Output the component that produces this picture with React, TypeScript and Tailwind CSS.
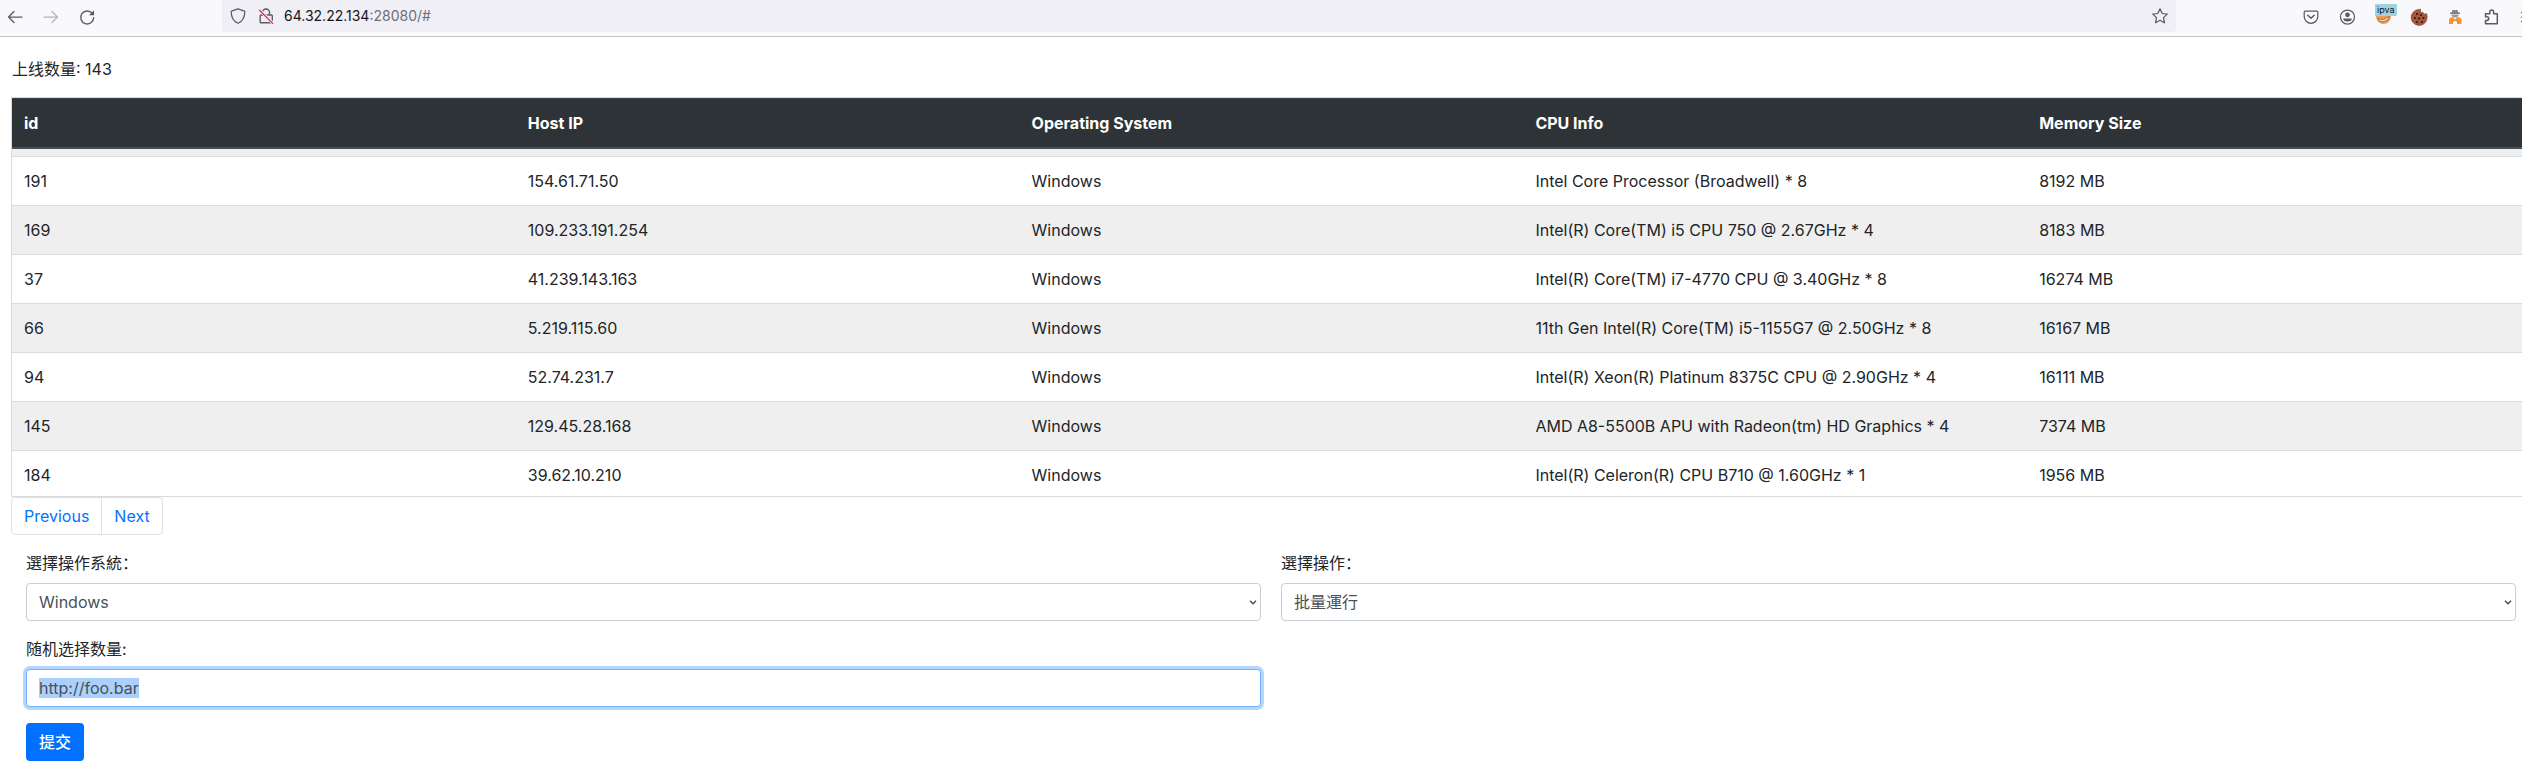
import { useEffect, useRef, type ReactNode } from "react";

type Host = { id: number; ip: string; os: string; cpu: string; memory: string };

const hosts: Host[] = [
  { id: 191, ip: "154.61.71.50", os: "Windows", cpu: "Intel Core Processor (Broadwell) * 8", memory: "8192 MB" },
  { id: 169, ip: "109.233.191.254", os: "Windows", cpu: "Intel(R) Core(TM) i5 CPU 750 @ 2.67GHz * 4", memory: "8183 MB" },
  { id: 37, ip: "41.239.143.163", os: "Windows", cpu: "Intel(R) Core(TM) i7-4770 CPU @ 3.40GHz * 8", memory: "16274 MB" },
  { id: 66, ip: "5.219.115.60", os: "Windows", cpu: "11th Gen Intel(R) Core(TM) i5-1155G7 @ 2.50GHz * 8", memory: "16167 MB" },
  { id: 94, ip: "52.74.231.7", os: "Windows", cpu: "Intel(R) Xeon(R) Platinum 8375C CPU @ 2.90GHz * 4", memory: "16111 MB" },
  { id: 145, ip: "129.45.28.168", os: "Windows", cpu: "AMD A8-5500B APU with Radeon(tm) HD Graphics * 4", memory: "7374 MB" },
  { id: 184, ip: "39.62.10.210", os: "Windows", cpu: "Intel(R) Celeron(R) CPU B710 @ 1.60GHz * 1", memory: "1956 MB" },
];

const headings = ["id", "Host IP", "Operating System", "CPU Info", "Memory Size"];

function IconButton({ label, children }: { label: string; children: ReactNode }) {
  return (
    <button type="button" aria-label={label} className="relative size-4 shrink-0 text-[#5b5b66]">
      <svg viewBox="0 0 16 16" className="size-4 overflow-visible" fill="none" stroke="currentColor" strokeWidth="1.25" strokeLinecap="round" strokeLinejoin="round">
        {children}
      </svg>
    </button>
  );
}

function BrowserBar() {
  return (
    <header className="flex h-[37px] items-start border-b border-[#c0c0c6] bg-[#f9f9fb]">
      <nav className="flex h-[33px] shrink-0 items-center gap-5 pl-[7px]">
        <IconButton label="Back">
          <path d="M15 8H1.5M7 2.5 1.5 8 7 13.5" />
        </IconButton>
        <IconButton label="Forward">
          <path d="M1 8h13.500M9 2.500 14.500 8 9 13.500" stroke="#b4b4ba" />
        </IconButton>
        <IconButton label="Reload">
          <path d="M13.300 4.400A6.500 6.500 0 1 0 14.700 8.600" strokeWidth="1.4" />
          <path d="M15 1.200v5h-5z" fill="currentColor" stroke="none" />
        </IconButton>
      </nav>

      <div className="ml-[127px] mr-[127px] flex h-8 min-w-0 flex-1 items-center rounded-b bg-[#f0eff5] pl-2 pr-2">
        <IconButton label="Tracking protection">
          <path d="M8 .8 14.500 3.200c.2 0 .3.200.3.500 0 5.500-2.300 9.500-6.800 11.600C3.500 13.200 1.200 9.200 1.200 3.700c0-.3.100-.5.300-.5z" />
        </IconButton>
        <span className="ml-3 flex">
          <IconButton label="Connection not secure">
            <path d="M4.500 7V4.500a3.500 3.500 0 0 1 7 0V7M3 7h10.500q.8 0 .8.800v6.200q0 .8-.8.800H3q-.8 0-.8-.8V7.800Q2.200 7 3 7z" strokeWidth="1.400" />
            <path d="M1.800 2.200 15 15.400" stroke="#f0eff5" strokeWidth="3" />
            <path d="M1.500 2.200 14.700 15.400" stroke="#e22850" strokeWidth="1.300" />
          </IconButton>
        </span>
        <span className="ml-[10px] flex-1 text-[14px] leading-8 text-[#6e6e78]">
          <span className="text-[#15141a]">64.32.22.134</span>:28080/#
        </span>
        <IconButton label="Bookmark">
          <path d="m8 .8 2.200 4.700 5.100.6-3.800 3.500 1 5.200L8 12.300l-4.500 2.500 1-5.200L.7 6.100l5.100-.6z" />
        </IconButton>
      </div>

      <div className="flex h-[33px] w-[219px] shrink-0 items-center gap-5 overflow-hidden">
        <IconButton label="Pocket">
          <path d="M2.200 2.200h11.600q1 0 1 1v4.300a6.800 6.800 0 0 1-13.600 0V3.200q0-1 1-1z" />
          <path d="M4.800 6.300 8 9.300l3.200-3" strokeWidth="1.500" />
        </IconButton>
        <IconButton label="Account">
          <circle cx="8.500" cy="8" r="7" />
          <circle cx="8.500" cy="5.800" r="2.400" fill="currentColor" stroke="none" />
          <path d="M4.300 9.500h8.400q.2 3-4.200 3t-4.200-3z" fill="currentColor" stroke="none" />
        </IconButton>
        <button type="button" aria-label="IP address extension" className="relative size-4 shrink-0">
          <svg viewBox="0 0 16 16" className="size-4 overflow-visible">
            <circle cx="8.500" cy="7.500" r="7.500" fill="#ef9a4c" />
            <path d="M3 9q5 4 11-2l-1 4q-5 3-9 1z" fill="#f6e3d0" stroke="#9a6a48" strokeWidth=".9" />
          </svg>
          <span className="absolute -top-[5px] left-0 rounded-[1px] bg-[#9fd3e2] px-[2px] text-[9px] leading-3 text-[#15141a]">ipva</span>
        </button>
        <IconButton label="Cookie editor">
          <path d="M7 .5a8 8 0 1 0 9 9.500 8 8 0 0 0-.6-5.500l-2 .8-1.500-2-2.400.200L9.500.6z" fill="#a6583c" stroke="#7a3f2b" strokeWidth=".6" />
          <g fill="#2b1310" stroke="none">
            <circle cx="6" cy="5" r="1" />
            <circle cx="10" cy="6" r="1" />
            <circle cx="4" cy="9" r="1" />
            <circle cx="8" cy="9.500" r="1.100" />
            <circle cx="12.500" cy="9" r="1.100" />
            <circle cx="6" cy="13" r="1" />
            <circle cx="11" cy="13" r="1" />
          </g>
        </IconButton>
        <IconButton label="User agent extension">
          <g stroke="none">
            <path d="M5.500 1h1.700l.8.600.8-.6h1.700l.7 2.500H13V5H3V3.500h1.800z" fill="#808086" />
            <path d="M4.500 5.500h7V7l-2 1.500h-3L4.500 7z" fill="#9a9aa0" />
            <path d="M5.500 8 8 10.500 10.500 8l3 1q1 .5 1 2v4H10v-2H6v2H2v-4q0-1.500 1-2z" fill="#f5923a" />
            <path d="M6.800 12h2.400v3H6.800z" fill="#f9f9fb" />
          </g>
        </IconButton>
        <IconButton label="Extensions">
          <path d="M2.500 14.800v-3.300h1.300a1.900 1.900 0 0 0 0-3.800H2.500V4.800h4.300V3a1.900 1.900 0 0 1 3.800 0v1.800h3.700v10z" strokeWidth="1.500" />
        </IconButton>
        <IconButton label="Menu">
          <path d="M2.500 3.500h12M2.500 8h12M2.500 12.500h12" />
        </IconButton>
      </div>
    </header>
  );
}

function SelectField({ id, label, options }: { id: string; label: string; options: string[] }) {
  return (
    <div>
      <label htmlFor={id} className="mb-2 block">
        {label}
      </label>
      <div className="relative">
        <select id={id} className="block h-[38px] w-full appearance-none rounded border border-[#c8ced3] bg-white px-3 text-[#495057]">
          {options.map((option) => (
            <option key={option}>{option}</option>
          ))}
        </select>
        <svg viewBox="0 0 8 5" className="pointer-events-none absolute right-1 top-[17px] h-[5px] w-2 overflow-visible" fill="none" stroke="#4b4f54" strokeWidth="1.500">
          <path d="m1 .8 3 3 3-3" />
        </svg>
      </div>
    </div>
  );
}

export default function App() {
  const countRef = useRef<HTMLInputElement>(null);

  useEffect(() => {
    countRef.current?.focus();
    countRef.current?.select();
  }, []);

  return (
    <div className="min-h-screen overflow-hidden bg-white font-['Inter','Noto_Sans_CJK_SC',sans-serif] text-[16px] leading-6 text-[#212529]">
      <BrowserBar />

      <main className="pt-5">
        <p className="mb-4 pl-3">上线数量: 143</p>

        <div className="-mr-[10px] ml-[11px] h-[400px] overflow-hidden border border-[#d8dbde]">
          <table className="w-full table-fixed border-separate border-spacing-0 text-left">
            <thead>
              <tr className="bg-[#2e3338] text-white">
                {headings.map((heading) => (
                  <th key={heading} className="border-b-2 border-t border-[#454d55] border-t-[#3a4148] p-3 font-bold">
                    {heading}
                  </th>
                ))}
              </tr>
            </thead>
            <tbody>
              <tr aria-hidden="true" className="bg-[#efefef]">
                <td colSpan={5} className="h-[7px]" />
              </tr>
              {hosts.map((host) => (
                <tr key={host.id} className="odd:bg-[#efefef]">
                  <td className="border-t border-[#d8dbde] p-3">{host.id}</td>
                  <td className="border-t border-[#d8dbde] p-3">{host.ip}</td>
                  <td className="border-t border-[#d8dbde] p-3">{host.os}</td>
                  <td className="border-t border-[#d8dbde] p-3">{host.cpu}</td>
                  <td className="border-t border-[#d8dbde] p-3">{host.memory}</td>
                </tr>
              ))}
            </tbody>
          </table>
        </div>

        <nav aria-label="Pages" className="mb-4 ml-[11px] flex w-fit divide-x divide-[#dee2e6] rounded border border-[#dee2e6] text-[#0073ff]">
          <a href="#" className="px-3 py-[6px]">Previous</a>
          <a href="#" className="px-3 py-[6px]">Next</a>
        </nav>

        <form className="grid grid-cols-2 gap-x-5 gap-y-4 pl-[26px] pr-[6px]">
          <SelectField id="os" label="選擇操作系統：" options={["Windows", "Linux"]} />
          <SelectField id="action" label="選擇操作：" options={["批量運行"]} />
          <div>
            <label htmlFor="count" className="mb-2 block">
              随机选择数量:
            </label>
            <input
              ref={countRef}
              id="count"
              type="text"
              defaultValue="http://foo.bar"
              className="block h-[38px] w-full rounded border border-[#73b1fb] bg-white px-3 text-[#495057] outline-none ring-3 ring-[#b5d7ff] selection:bg-[#abd0fb] selection:text-[#495057]"
            />
          </div>
          <button type="button" className="col-start-1 h-[38px] justify-self-start rounded bg-[#0070ff] px-[13px] font-medium text-white">
            提交
          </button>
        </form>
      </main>
    </div>
  );
}
